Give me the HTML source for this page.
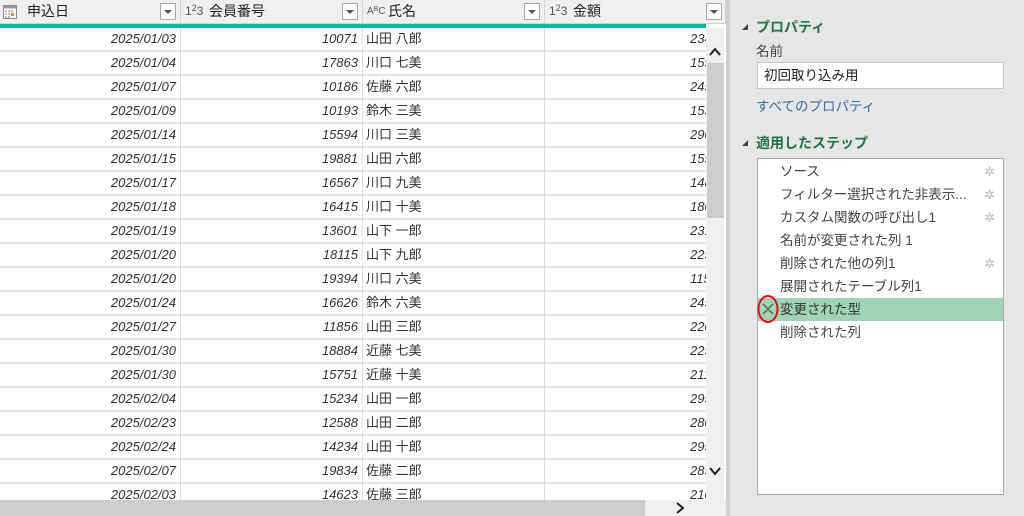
<!DOCTYPE html>
<html><head><meta charset="utf-8"><style>
*{margin:0;padding:0;box-sizing:border-box}
body{width:1024px;height:516px;overflow:hidden;background:#e6e6e6;font-family:"Liberation Sans","Noto Sans CJK JP",sans-serif;position:relative}
#grid{position:absolute;left:0;top:0;width:726px;height:516px;background:#fff;overflow:hidden}
.hdr{position:absolute;top:0;height:24px;background:#f0f0f0;border-right:1px solid #d4d4d4;border-bottom:1px solid #d4d4d4;font-size:14px;color:#222;line-height:23px}
.dd{position:absolute;top:3px;width:16px;height:17px;border:1px solid #aaa;background:#fff}
.dd:after{content:"";position:absolute;left:3px;top:6px;border-left:4px solid transparent;border-right:4px solid transparent;border-top:4px solid #555}
.teal{position:absolute;top:24px;left:0;width:706px;height:4px;background:#16b3a3}
.row{position:absolute;left:0;width:706px;height:24px;border-bottom:2px solid #e4e4e4;font-size:13px;line-height:22px;color:#333}
.c{position:absolute;top:0;height:24px;border-right:1px solid #dcdcdc;white-space:nowrap;overflow:hidden}
.i{font-style:italic;text-align:right;padding-right:4px}
.vs{position:absolute;left:706px;top:28px;width:18px;height:472px;background:#f0f0f0}
.hs{position:absolute;left:0;top:500px;width:726px;height:16px;background:#f0f0f0}
#div{position:absolute;left:726px;top:0;width:4px;height:516px;background:#cfcfcf}
.h2{position:absolute;left:756px;font-size:14px;font-weight:bold;color:#217346}
.tri{position:absolute;left:742px;width:0;height:0;border-left:6px solid transparent;border-bottom:6px solid #444}
.step{position:absolute;left:0;width:245px;height:23px;line-height:23px;padding-left:22px;font-size:13.5px;color:#444;white-space:nowrap}
.gear{position:absolute;right:8px;top:0;color:#bbb;font-size:13px}
.ty{position:absolute;left:4px;top:0;font-size:12px;color:#555}
</style></head><body>
<div id="grid">
<div class="hdr" style="left:0;width:181px">
 <svg style="position:absolute;left:3px;top:5px" width="14" height="14"><rect x="0.5" y="0.5" width="13" height="13" fill="#fff" stroke="#888"/><rect x="0.5" y="0.5" width="13" height="3" fill="#999"/><g fill="#bbb"><rect x="2" y="5" width="2" height="2"/><rect x="5" y="5" width="2" height="2"/><rect x="8" y="5" width="2" height="2"/><rect x="2" y="8" width="2" height="2"/><rect x="5" y="8" width="2" height="2"/><rect x="2" y="11" width="2" height="2"/><rect x="5" y="11" width="2" height="2"/></g><rect x="8" y="8" width="3" height="3" fill="#e8893a"/></svg>
 <span style="position:absolute;left:27px">申込日</span><div class="dd" style="left:160px"></div></div>
<div class="hdr" style="left:181px;width:182px"><span class="ty">1<span style="position:relative;top:-4px;font-size:9px">2</span>3</span><span style="position:absolute;left:28px">会員番号</span><div class="dd" style="left:161px"></div></div>
<div class="hdr" style="left:363px;width:182px"><span class="ty" style="font-size:10px">A<span style="position:relative;top:-3px;font-size:7px">B</span>C</span><span style="position:absolute;left:25px">氏名</span><div class="dd" style="left:161px"></div></div>
<div class="hdr" style="left:545px;width:181px"><span class="ty">1<span style="position:relative;top:-4px;font-size:9px">2</span>3</span><span style="position:absolute;left:28px">金額</span><div class="dd" style="left:161px"></div></div>
<div class="teal"></div>
<div id="rows"></div>
<div class="vs"><svg width="18" height="472"><path d="M4 27 L9 21 L14 27" fill="none" stroke="#222" stroke-width="2"/><rect x="1" y="35" width="17" height="155" fill="#cdcdcd"/><path d="M4 440 L9 446 L14 440" fill="none" stroke="#222" stroke-width="2"/></svg></div>
<div class="hs"><div style="position:absolute;left:0;top:0;width:645px;height:16px;background:#cdcdcd"></div><svg style="position:absolute;left:674px;top:2px" width="12" height="12"><path d="M3 1 L9 6 L3 11" fill="none" stroke="#222" stroke-width="2"/></svg></div>
</div>
<div id="div"></div>
<div class="tri" style="top:24px"></div>
<div class="h2" style="top:17px">プロパティ</div>
<div style="position:absolute;left:756px;top:40px;font-size:13.5px;color:#444">名前</div>
<div style="position:absolute;left:757px;top:62px;width:247px;height:27px;background:#fff;border:1px solid #c6c6c6;font-size:13.5px;line-height:25px;padding-left:6px;color:#222">初回取り込み用</div>
<div style="position:absolute;left:756px;top:95px;font-size:13.5px;color:#3c6ea3">すべてのプロパティ</div>
<div class="tri" style="top:140px"></div>
<div class="h2" style="top:133px">適用したステップ</div>
<div style="position:absolute;left:757px;top:158px;width:247px;height:337px;background:#fff;border:1px solid #aaa">
 <div class="step" style="top:1px">ソース<span class="gear">✲</span></div>
 <div class="step" style="top:24px">フィルター選択された非表示...<span class="gear">✲</span></div>
 <div class="step" style="top:47px">カスタム関数の呼び出し1<span class="gear">✲</span></div>
 <div class="step" style="top:70px">名前が変更された列 1</div>
 <div class="step" style="top:93px">削除された他の列1<span class="gear">✲</span></div>
 <div class="step" style="top:116px">展開されたテーブル列1</div>
 <div class="step" style="top:139px;background:#9fd5b6;color:#333">変更された型</div>
 <div class="step" style="top:162px">削除された列</div>
 <svg style="position:absolute;left:-1px;top:135px" width="26" height="32"><path d="M6 10 L16 20 M16 10 L6 20" stroke="#666" stroke-width="1.5"/><ellipse cx="11" cy="15" rx="9.5" ry="13" fill="none" stroke="#e0101e" stroke-width="2"/></svg>
</div>
<script>
var d=[["2025/01/03",10071,"山田 八郎",2340],["2025/01/04",17863,"川口 七美",1590],["2025/01/07",10186,"佐藤 六郎",2450],["2025/01/09",10193,"鈴木 三美",1530],["2025/01/14",15594,"川口 三美",2900],["2025/01/15",19881,"山田 六郎",1590],["2025/01/17",16567,"川口 九美",1480],["2025/01/18",16415,"川口 十美",1800],["2025/01/19",13601,"山下 一郎",2310],["2025/01/20",18115,"山下 九郎",2250],["2025/01/20",19394,"川口 六美",1150],["2025/01/24",16626,"鈴木 六美",2450],["2025/01/27",11856,"山田 三郎",2200],["2025/01/30",18884,"近藤 七美",2250],["2025/01/30",15751,"近藤 十美",2110],["2025/02/04",15234,"山田 一郎",2950],["2025/02/23",12588,"山田 二郎",2800],["2025/02/24",14234,"山田 十郎",2950],["2025/02/07",19834,"佐藤 二郎",2850],["2025/02/03",14623,"佐藤 三郎",2100]];
var h="";d.forEach(function(r,k){h+='<div class="row" style="top:'+(28+k*24)+'px"><div class="c i" style="left:0;width:181px">'+r[0]+'</div><div class="c i" style="left:181px;width:182px">'+r[1]+'</div><div class="c" style="left:363px;width:182px;padding-left:3px">'+r[2]+'</div><div class="c" style="left:545px;width:161px;border:none"><span style="position:absolute;left:145px;font-style:italic">'+r[3]+'</span></div></div>'});
document.getElementById("rows").innerHTML=h;
</script>
</body></html>
